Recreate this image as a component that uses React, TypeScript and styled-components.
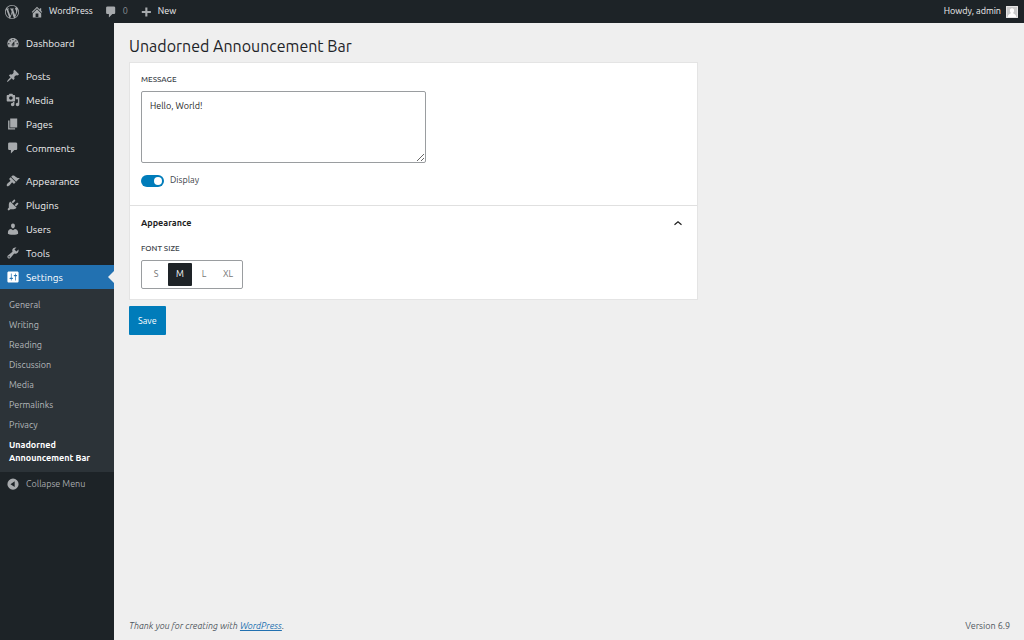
import React, { useState } from "react";
import styled, { createGlobalStyle, css } from "styled-components";

const GlobalStyle = createGlobalStyle`
  *, *::before, *::after { box-sizing: border-box; }
  body {
    margin: 0;
    background: #efefef;
    color: #3c434a;
    font-family: "Ubuntu", "Noto Sans", "Open Sans", sans-serif;
    font-size: 9px;
    line-height: 13px;
  }
  a { text-decoration: none; color: inherit; }
  ul { list-style: none; margin: 0; padding: 0; }
`;

const paths = {
  wordpress:
    "M20 10c0-5.51-4.49-10-10-10C4.48 0 0 4.49 0 10c0 5.52 4.48 10 10 10 5.51 0 10-4.48 10-10zM7.78 15.37L4.37 6.22c.55-.02 1.17-.08 1.17-.08.5-.06.44-1.13-.06-1.11 0 0-1.45.11-2.37.11-.18 0-.37 0-.58-.01C4.12 2.69 6.87 1.11 10 1.11c2.33 0 4.45.87 6.05 2.34-.68-.11-1.65.39-1.65 1.58 0 .74.45 1.36.9 2.1.35.61.55 1.36.55 2.46 0 1.49-1.4 5-1.4 5l-3.03-8.37c.54-.02.82-.17.82-.17.5-.05.44-1.25-.06-1.22 0 0-1.44.12-2.38.12-.87 0-2.33-.12-2.33-.12-.5-.03-.56 1.2-.06 1.22l.92.08 1.26 3.41zM17.41 10c.24-.64.74-1.87.43-4.25.7 1.29 1.05 2.71 1.05 4.25 0 3.29-1.73 6.24-4.4 7.78.97-2.59 1.94-5.2 2.92-7.78zM6.1 18.09C3.12 16.65 1.11 13.53 1.11 10c0-1.3.23-2.48.72-3.59C3.25 10.3 4.67 14.2 6.1 18.09zm4.03-6.63l2.58 6.98c-.86.29-1.76.45-2.71.45-.79 0-1.57-.11-2.29-.33.81-2.38 1.62-4.74 2.42-7.1z",
  home: "M16 8.5l1.53 1.53-1.06 1.06L10 4.6l-6.47 6.49-1.06-1.06L10 2.5l4 4v-2h2v4zm-6-2.46l6 5.99V18H4v-5.97zM12 17v-5H8v5h4z",
  comments:
    "M5 2h9q.82 0 1.41.59T16 4v7q0 .82-.59 1.41T14 13h-2l-5 5v-5H5q-.82 0-1.41-.59T3 11V4q0-.82.59-1.41T5 2z",
  plus: "M17 8.5v3h-5v5H9v-5H4v-3h5v-5h3v5z",
  dashboard:
    "M3.76 16h12.48c1.1-1.37 1.76-3.11 1.76-5 0-4.42-3.58-8-8-8s-8 3.58-8 8c0 1.89.66 3.63 1.76 5zM10 4c.55 0 1 .45 1 1s-.45 1-1 1-1-.45-1-1 .45-1 1-1zM6 6c.55 0 1 .45 1 1s-.45 1-1 1-1-.45-1-1 .45-1 1-1zm8 0c.55 0 1 .45 1 1s-.45 1-1 1-1-.45-1-1 .45-1 1-1zm-5.37 5.55L12 7v6c0 1.1-.9 2-2 2s-2-.9-2-2c0-.57.24-1.08.63-1.45zM4 10c.55 0 1 .45 1 1s-.45 1-1 1-1-.45-1-1 .45-1 1-1zm12 0c.55 0 1 .45 1 1s-.45 1-1 1-1-.45-1-1 .45-1 1-1zm-5 3c0-.55-.45-1-1-1s-1 .45-1 1 .45 1 1 1 1-.45 1-1z",
  posts:
    "M10.44 3.02l1.82-1.82 6.36 6.35-1.83 1.82c-1.05-.68-2.48-.57-3.41.36l-.75.75c-.92.93-1.04 2.35-.35 3.41l-1.83 1.82-2.41-2.41-2.8 2.79c-.42.42-3.38 2.71-3.8 2.29s1.86-3.39 2.28-3.81l2.79-2.79L4.1 9.36l1.83-1.82c1.05.69 2.48.57 3.4-.36l.75-.75c.93-.92 1.05-2.35.36-3.41z",
  media:
    "M13 11V4c0-.55-.45-1-1-1h-1.67L9 1H5L3.67 3H2c-.55 0-1 .45-1 1v7c0 .55.45 1 1 1h10c.55 0 1-.45 1-1zM7 4.5c1.38 0 2.5 1.12 2.5 2.5S8.38 9.5 7 9.5 4.5 8.38 4.5 7 5.62 4.5 7 4.5zM14 6h5v10.5c0 1.38-1.12 2.5-2.5 2.5S14 17.88 14 16.5s1.12-2.5 2.5-2.5c.17 0 .34.02.5.05V9h-3V6zm-4 8.05V13h2v3.5c0 1.38-1.12 2.5-2.5 2.5S7 17.88 7 16.5 8.12 14 9.5 14c.17 0 .34.02.5.05z",
  pages: "M6 15V2h10v13H6zm-1 1h8v2H3V5h2v11z",
  appearance:
    "M14.48 11.06L7.41 3.99l1.5-1.5c.5-.56 2.3-.47 3.51.32 1.21.8 1.43 1.28 2.91 2.1 1.18.64 2.45 1.26 4.45.85zm-.71.71L6.7 4.7 4.93 6.47c-.39.39-.39 1.02 0 1.41l1.06 1.06c.39.39.39 1.03 0 1.42-.6.6-1.43 1.11-2.21 1.69-.35.26-.7.53-1.01.84C1.43 14.23.4 16.08 1.4 17.07c.99 1 2.84-.03 4.18-1.36.31-.31.58-.66.85-1.02.57-.78 1.08-1.61 1.69-2.21.39-.39 1.02-.39 1.41 0l1.06 1.06c.39.39 1.02.39 1.41 0z",
  plugins:
    "M13.11 4.36L9.87 7.6 8 5.73l3.24-3.24c.35-.34 1.05-.2 1.56.32.52.51.66 1.21.31 1.55zm-8 1.77l.91-1.12 9.01 9.01-1.19.84c-.71.71-2.63 1.16-3.82 1.16H6.14L4.9 17.26c-.59.59-1.54.59-2.12 0-.59-.58-.59-1.53 0-2.12l1.24-1.24v-3.88c0-1.13.4-3.19 1.09-3.89zm7.26 3.97l3.24-3.24c.34-.35 1.04-.21 1.55.31.52.51.66 1.21.31 1.55l-3.24 3.25z",
  users:
    "M10 9.25c-2.27 0-2.73-3.44-2.73-3.44C7 4.02 7.82 2 9.97 2c2.16 0 2.98 2.02 2.71 3.81 0 0-.41 3.44-2.68 3.44zm0 2.57L12.72 10c2.39 0 4.52 2.33 4.52 4.53v2.49s-3.65 1.13-7.24 1.13c-3.65 0-7.24-1.13-7.24-1.13v-2.49c0-2.25 1.94-4.48 4.47-4.48z",
  tools:
    "M16.68 9.77c-1.34 1.34-3.3 1.67-4.95.99l-5.41 6.52c-.99.99-2.59.99-3.58 0s-.99-2.59 0-3.57l6.52-5.42c-.68-1.65-.35-3.61.99-4.95 1.28-1.28 3.12-1.62 4.72-1.06l-2.89 2.89 2.82 2.82 2.86-2.87c.53 1.58.18 3.39-1.08 4.65zM3.81 16.21c.4.39 1.04.39 1.43 0 .4-.4.4-1.04 0-1.43-.39-.4-1.03-.4-1.43 0-.39.39-.39 1.03 0 1.43z",
  settings:
    "M18 16V4c0-1.1-.9-2-2-2H4c-1.1 0-2 .9-2 2v12c0 1.1.9 2 2 2h12c1.1 0 2-.9 2-2zM8 11h1c.55 0 1 .45 1 1s-.45 1-1 1H8v1.5c0 .28-.22.5-.5.5s-.5-.22-.5-.5V13H6c-.55 0-1-.45-1-1s.45-1 1-1h1V5.5c0-.28.22-.5.5-.5s.5.22.5.5V11zm5-2h-1c-.55 0-1-.45-1-1s.45-1 1-1h1V5.5c0-.28.22-.5.5-.5s.5.22.5.5V7h1c.55 0 1 .45 1 1s-.45 1-1 1h-1v5.5c0 .28-.22.5-.5.5s-.5-.22-.5-.5V9z",
  collapse:
    "M10 2.2a8 8 0 1 0 0 16 8 8 0 0 0 0-16zm2.4 3.8v8.4L6.4 10.2z",
};

type IconName = keyof typeof paths;

const Glyph = styled.svg`
  flex: none;
  width: 14px;
  height: 14px;
  fill: currentColor;
`;

const Icon = ({ name }: { name: IconName }) => (
  <Glyph viewBox="0 0 20 20" aria-hidden="true">
    <path fillRule="evenodd" d={paths[name]} />
  </Glyph>
);

const Page = styled.div`
  min-height: 100vh;
  display: flex;
  flex-direction: column;
`;

const AdminBar = styled.header`
  display: flex;
  align-items: center;
  gap: 11px;
  height: 23px;
  padding: 0 6px 0 5px;
  background: #1d2327;
  color: #f0f0f1;
`;

const BarLink = styled.a<{ $muted?: boolean }>`
  display: flex;
  align-items: center;
  gap: 5px;
  color: ${(p) => (p.$muted ? "#8c9196" : "#f0f0f1")};

  ${Glyph} { color: #a7aaad; }
`;

const Account = styled.a`
  display: flex;
  align-items: center;
  gap: 5px;
  margin-left: auto;
`;

const Avatar = styled.svg`
  width: 12px;
  height: 12px;
`;

const Body = styled.div`
  flex: 1;
  display: flex;
`;

const Sidebar = styled.nav`
  flex: none;
  width: 114px;
  padding-top: 8px;
  background: #1d2327;
  color: #f0f0f1;
`;

const menuRow = css`
  display: flex;
  align-items: center;
  gap: 6px;
  width: 100%;
  height: 24px;
  padding: 0 6px;
  font-size: 10px;
`;

const MenuItem = styled.li<{ $group?: boolean }>`
  margin-top: ${(p) => (p.$group ? 9 : 0)}px;
`;

const MenuLink = styled.a<{ $current?: boolean }>`
  ${menuRow}
  position: relative;
  background: ${(p) => (p.$current ? "#2271b1" : "transparent")};
  color: ${(p) => (p.$current ? "#fff" : "#f0f0f1")};

  ${Glyph} { color: ${(p) => (p.$current ? "#fff" : "#a7aaad")}; }

  ${(p) =>
    p.$current &&
    css`
      &::after {
        content: "";
        position: absolute;
        right: 0;
        border: 6px solid transparent;
        border-right-color: #efefef;
        border-left-width: 0;
      }
    `}
`;

const Submenu = styled.ul`
  padding: 6px 0 4px;
  background: #2c3338;
`;

const SubLink = styled.a<{ $current?: boolean }>`
  display: block;
  padding: 4px 9px 3px;
  color: ${(p) => (p.$current ? "#fff" : "#b4b8bb")};
  font-weight: ${(p) => (p.$current ? 700 : 400)};
`;

const CollapseButton = styled.button`
  ${menuRow}
  border: 0;
  background: none;
  color: #a7aaad;
  font-family: inherit;
  font-size: 9px;
`;

const Main = styled.main`
  flex: 1;
  min-width: 0;
  display: flex;
  flex-direction: column;
  padding: 12px 14px 7px 15px;
`;

const Title = styled.h1`
  margin: 0 0 5px;
  color: #1d2327;
  font-size: 16px;
  font-weight: 400;
  line-height: 22px;
`;

const Form = styled.form`
  display: flex;
  flex-direction: column;
  align-items: flex-start;
  gap: 6px;
`;

const Panel = styled.div`
  width: 100%;
  max-width: 569px;
  border: 1px solid #e4e4e4;
  background: #fff;
`;

const Section = styled.section`
  display: flex;
  flex-direction: column;
  align-items: flex-start;
  padding: 11px 11px 10px;

  & + & { border-top: 1px solid #e0e0e0; }
`;

const caption = css`
  margin: 0 0 5px;
  padding: 0;
  color: #3c434a;
  font-size: 8px;
  font-weight: 500;
  line-height: 12px;
  text-transform: uppercase;
`;

const FieldLabel = styled.label`${caption}`;

const MessageBox = styled.textarea`
  display: block;
  width: 100%;
  max-width: 285px;
  height: 72px;
  padding: 8px;
  border: 1px solid #9a9da0;
  border-radius: 2px;
  background: #fff;
  color: #1e1e1e;
  font-family: inherit;
  font-size: 9px;
  line-height: 13px;
  resize: vertical;
`;

const ToggleLabel = styled.label`
  display: flex;
  align-items: center;
  gap: 6px;
  margin: 11px 0 8px;
`;

const Toggle = styled.input`
  appearance: none;
  display: flex;
  align-items: center;
  width: 23px;
  height: 12px;
  margin: 0;
  padding: 0 2px;
  border-radius: 6px;
  background: #949494;

  &::before {
    content: "";
    width: 8px;
    height: 8px;
    border-radius: 50%;
    background: #fff;
  }

  &:checked {
    justify-content: flex-end;
    background: #007cba;
  }
`;

const Disclosure = styled.button`
  display: flex;
  align-items: center;
  justify-content: space-between;
  width: 100%;
  margin-bottom: 13px;
  padding: 0 2px 0 0;
  border: 0;
  background: none;
  color: #1e1e1e;
  font-family: inherit;
  font-size: 9px;
  font-weight: 600;
  line-height: 13px;
`;

const Chevron = styled.svg<{ $open: boolean }>`
  width: 12px;
  height: 12px;
  fill: none;
  stroke: currentColor;
  stroke-width: 1.2;
  transform: ${(p) => (p.$open ? "none" : "rotate(180deg)")};
`;

const SizeField = styled.fieldset`
  min-width: 0;
  margin: 0;
  padding: 0;
  border: 0;
`;

const SizeLegend = styled.legend`${caption}`;

const SizeGroup = styled.div`
  display: flex;
  padding: 2px;
  border: 1px solid #9a9da0;
  border-radius: 2px;
`;

const SizeOption = styled.label`
  display: flex;
  align-items: center;
  justify-content: center;
  width: 24px;
  height: 23px;
  border-radius: 1px;
  color: #757575;

  &:has(input:checked) {
    background: #1e2327;
    color: #fff;
  }

  input {
    appearance: none;
    width: 0;
    height: 0;
    margin: 0;
  }
`;

const SaveButton = styled.button`
  height: 29px;
  padding: 0 9px;
  border: 0;
  border-radius: 1px;
  background: #007cba;
  color: #fff;
  font-family: inherit;
  font-size: 9px;
`;

const Footer = styled.footer`
  display: flex;
  justify-content: space-between;
  margin-top: auto;
  color: #50575e;

  p { margin: 0; }
  em a { color: #2271b1; text-decoration: underline; }
`;

const menu: { label: string; icon: IconName; group?: boolean; current?: boolean }[] = [
  { label: "Dashboard", icon: "dashboard" },
  { label: "Posts", icon: "posts", group: true },
  { label: "Media", icon: "media" },
  { label: "Pages", icon: "pages" },
  { label: "Comments", icon: "comments" },
  { label: "Appearance", icon: "appearance", group: true },
  { label: "Plugins", icon: "plugins" },
  { label: "Users", icon: "users" },
  { label: "Tools", icon: "tools" },
  { label: "Settings", icon: "settings", current: true },
];

const submenu = [
  "General",
  "Writing",
  "Reading",
  "Discussion",
  "Media",
  "Permalinks",
  "Privacy",
  "Unadorned Announcement Bar",
];

const sizes = ["S", "M", "L", "XL"];

export default function App() {
  const [message, setMessage] = useState("Hello, World!");
  const [display, setDisplay] = useState(true);
  const [open, setOpen] = useState(true);
  const [size, setSize] = useState("M");

  return (
    <Page>
      <GlobalStyle />
      <AdminBar>
        <BarLink href="#about" aria-label="About WordPress">
          <Icon name="wordpress" />
        </BarLink>
        <BarLink href="#site">
          <Icon name="home" />
          WordPress
        </BarLink>
        <BarLink href="#comments" $muted>
          <Icon name="comments" />
          0
        </BarLink>
        <BarLink href="#new">
          <Icon name="plus" />
          New
        </BarLink>
        <Account href="#profile">
          Howdy, admin
          <Avatar viewBox="0 0 12 12" aria-hidden="true">
            <rect width="12" height="12" fill="#c9cacb" />
            <path
              fill="#fff"
              d="M6 2.2c1.5 0 2.2 1.1 2.1 2.5C8 5.7 7.6 6.5 7.1 7c.1.9 2.9.9 3.2 4H1.7C2 7.9 4.8 7.9 4.9 7 4.4 6.5 4 5.7 3.9 4.7 3.8 3.3 4.5 2.2 6 2.2z"
            />
            <path fill="none" stroke="#e4e4e5" d="M.5.5h11v11H.5z" />
          </Avatar>
        </Account>
      </AdminBar>
      <Body>
        <Sidebar aria-label="Main menu">
          <ul>
            {menu.map((item) => (
              <MenuItem key={item.label} $group={item.group}>
                <MenuLink href={`#${item.label}`} $current={item.current}>
                  <Icon name={item.icon} />
                  {item.label}
                </MenuLink>
                {item.current && (
                  <Submenu>
                    {submenu.map((label, i) => (
                      <li key={label}>
                        <SubLink href={`#${label}`} $current={i === submenu.length - 1}>
                          {label}
                        </SubLink>
                      </li>
                    ))}
                  </Submenu>
                )}
              </MenuItem>
            ))}
          </ul>
          <CollapseButton type="button">
            <Icon name="collapse" />
            Collapse Menu
          </CollapseButton>
        </Sidebar>
        <Main>
          <Title>Unadorned Announcement Bar</Title>
          <Form onSubmit={(e) => e.preventDefault()}>
            <Panel>
              <Section>
                <FieldLabel htmlFor="message">Message</FieldLabel>
                <MessageBox
                  id="message"
                  value={message}
                  onChange={(e) => setMessage(e.target.value)}
                />
                <ToggleLabel>
                  <Toggle
                    type="checkbox"
                    checked={display}
                    onChange={(e) => setDisplay(e.target.checked)}
                  />
                  Display
                </ToggleLabel>
              </Section>
              <Section>
                <Disclosure type="button" aria-expanded={open} onClick={() => setOpen(!open)}>
                  Appearance
                  <Chevron viewBox="0 0 12 12" $open={open} aria-hidden="true">
                    <path d="M2.5 6.7 6 3.7l3.500 3" />
                  </Chevron>
                </Disclosure>
                {open && (
                  <SizeField>
                    <SizeLegend>Font size</SizeLegend>
                    <SizeGroup>
                      {sizes.map((s) => (
                        <SizeOption key={s}>
                          <input
                            type="radio"
                            name="size"
                            value={s}
                            checked={size === s}
                            onChange={() => setSize(s)}
                          />
                          {s}
                        </SizeOption>
                      ))}
                    </SizeGroup>
                  </SizeField>
                )}
              </Section>
            </Panel>
            <SaveButton type="submit">Save</SaveButton>
          </Form>
          <Footer>
            <p>
              <em>
                Thank you for creating with <a href="#wordpress">WordPress</a>.
              </em>
            </p>
            <p>Version 6.9</p>
          </Footer>
        </Main>
      </Body>
    </Page>
  );
}
